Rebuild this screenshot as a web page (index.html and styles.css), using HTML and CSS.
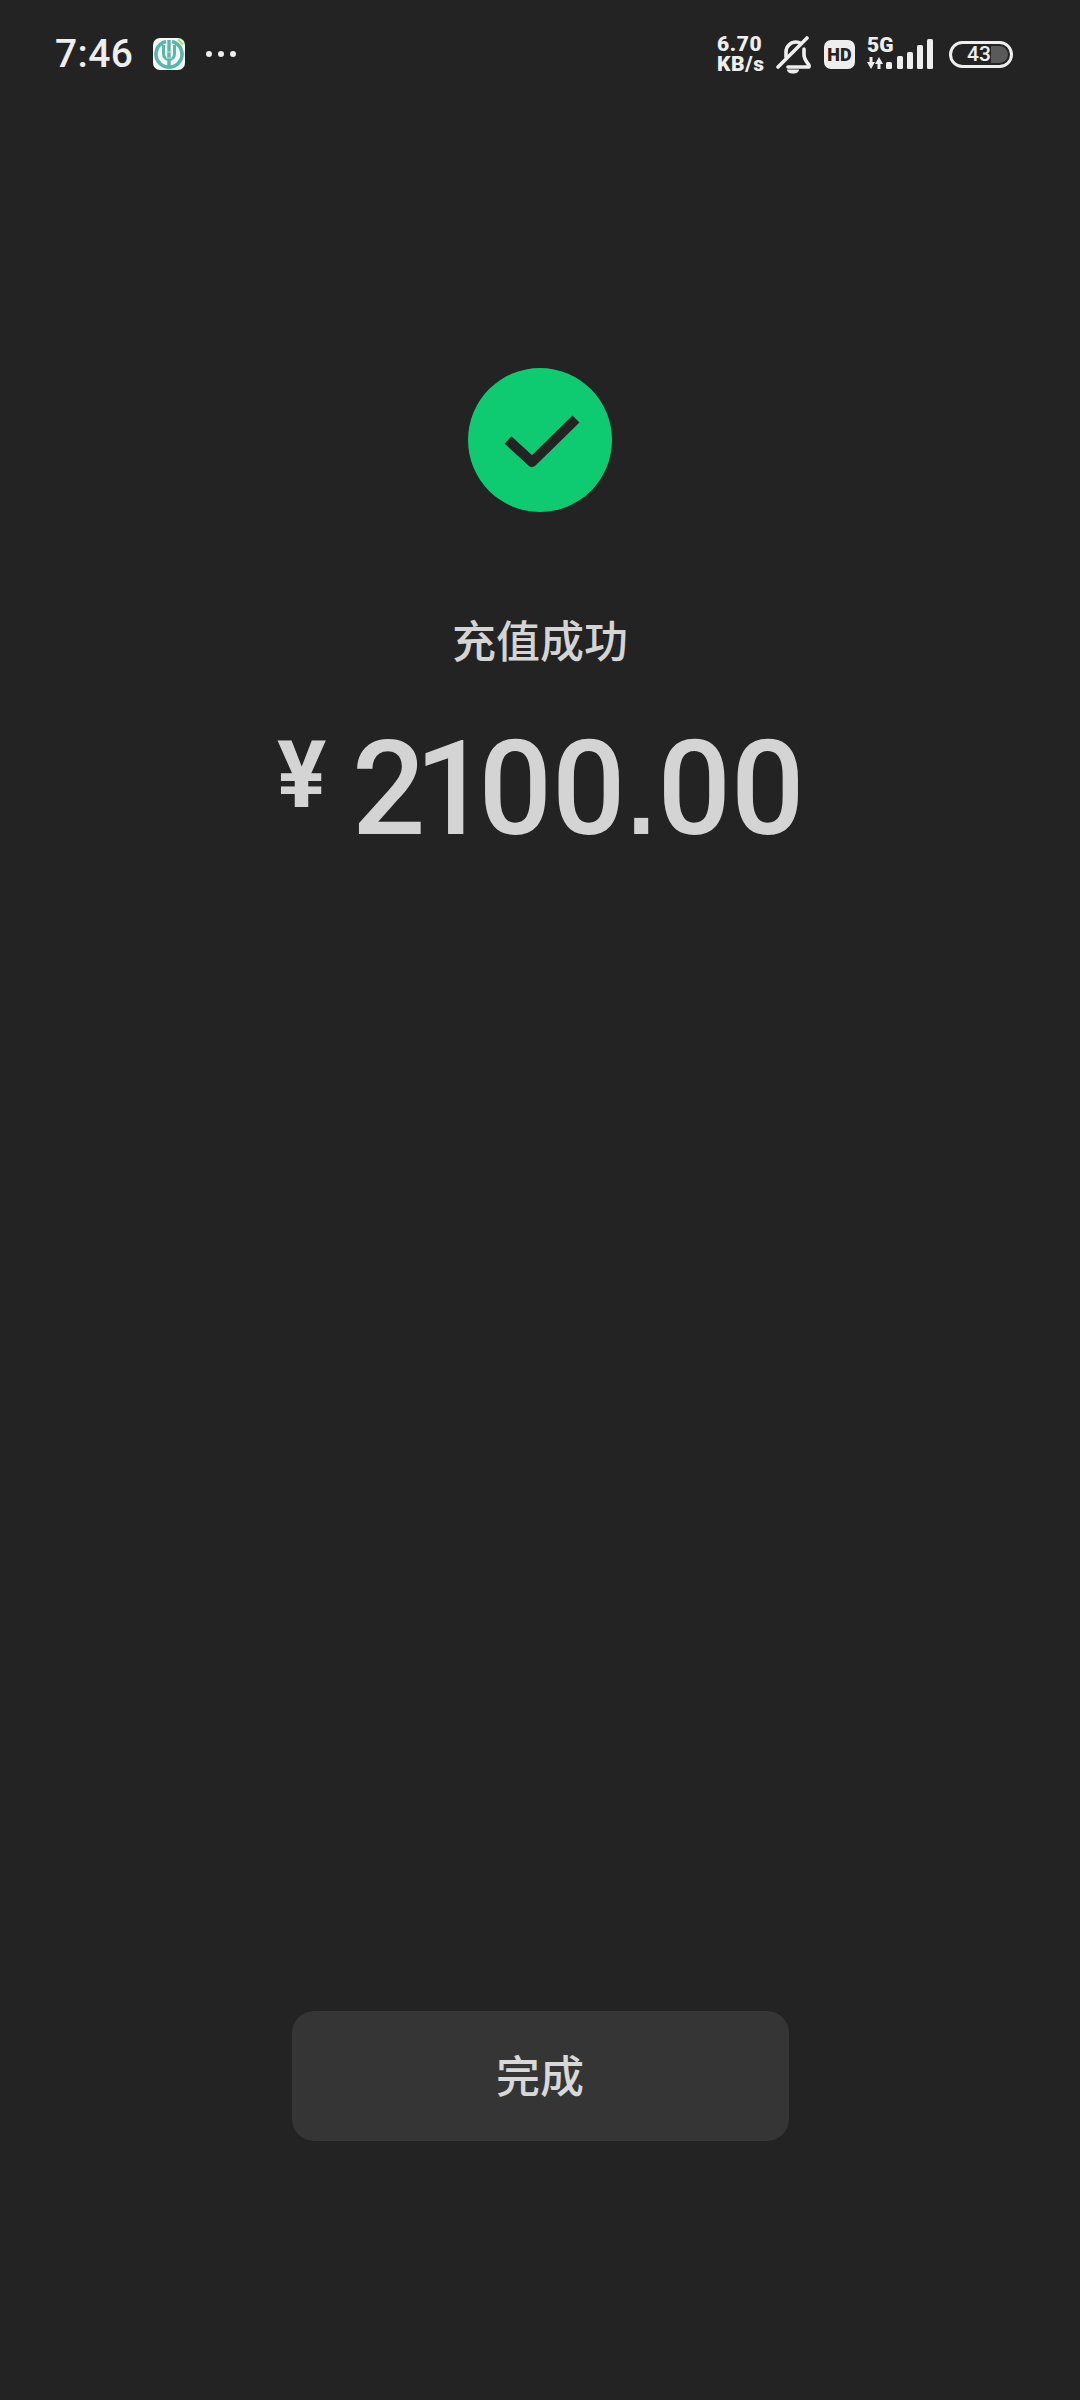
FILE: index.html
```html
<!DOCTYPE html>
<html lang="zh">
<head>
<meta charset="utf-8">
<title>充值成功</title>
<link rel="stylesheet" href="styles.css">
</head>
<body>
<div class="page">
  <header class="status">
    <div class="status-left">
      <span class="time">7:46</span>
      <svg class="app-icon" width="32" height="32" viewBox="0 0 32 32">
        <rect width="32" height="32" rx="7" fill="#f6faf9"/>
        <path d="M19 3.600A13 13 0 1 1 13 3.600" fill="none" stroke="#58b7ab" stroke-width="3.600"/>
        <path d="M10.500 7v9a5.500 5.500 0 0 0 11 0V7" fill="none" stroke="#58b7ab" stroke-width="3"/>
        <path d="M16 2v27" stroke="#58b7ab" stroke-width="3.400"/>
        <path d="M13 14h6M13 20h6" stroke="#bfe3de" stroke-width="1.200"/>
        <path d="M25 1.500l5 5" stroke="#a4dc74" stroke-width="2"/>
      </svg>
      <svg class="dots" width="32" height="8" viewBox="0 0 32 8">
        <circle cx="4" cy="4" r="3" fill="#eee"/><circle cx="16" cy="4" r="3" fill="#eee"/><circle cx="28" cy="4" r="3" fill="#eee"/>
      </svg>
    </div>
    <div class="status-right">
      <div class="speed"><span>6.70</span><span>KB/s</span></div>
      <svg class="bell" width="35" height="38" viewBox="0 0 35 38" fill="none" stroke="#eee" stroke-width="3.600" stroke-linecap="round" stroke-linejoin="round">
        <path d="M10 21v-5C10 10 15 6 20 6c2 0 3.500.5 5 1.500"/>
        <path d="M28 13v6c0 4 3 7.500 5 10v2H12"/>
        <path d="M2 31L31 2"/>
        <path d="M11 33.500h12c0 2.500-2.500 4-6 4s-6-1.500-6-4z" fill="#eee" stroke="none"/>
      </svg>
      <span class="hd">HD</span>
      <svg class="signal" width="67" height="38" viewBox="0 -3 67 38">
        <text class="five-g" x="1" y="17">5G</text>
        <path d="M3.500 22h3v5h2.500l-4 7-4-7h2.500zM11.500 34h3v-5h2.500l-4-7-4 7h2.500z" fill="#eee"/>
        <rect x="20" y="27" width="6" height="7" rx="1.500" fill="#eee"/>
        <rect x="31" y="21" width="6" height="13" rx="1.500" fill="#eee"/>
        <rect x="41" y="17" width="6" height="17" rx="1.500" fill="#eee"/>
        <rect x="51" y="10" width="6" height="24" rx="1.500" fill="#eee"/>
        <rect x="61" y="4" width="6" height="30" rx="1.500" fill="#eee"/>
      </svg>
      <div class="battery"><span class="battery-fill"></span><span class="battery-num">43</span></div>
    </div>
  </header>

  <main class="result">
    <svg class="check" width="144" height="144" viewBox="0 0 144 144">
      <circle cx="72" cy="72" r="72" fill="#0ecb72"/>
      <path d="M40 72l24 22 44-43" fill="none" stroke="#232323" stroke-width="10" stroke-linejoin="round"/>
    </svg>
    <h1 class="title">充值成功</h1>
    <div class="amount"><span class="yen">¥</span><span class="value"><span class="kern-two">2</span><span class="kern-one">1</span>0<span class="kern-zero">0</span><span class="dot">.</span>00</span></div>
  </main>

  <div class="action"><button class="done"><span class="done-label">完成</span></button></div>
</div>
</body>
</html>
```

FILE: styles.css
```css
* { box-sizing: border-box; }
html, body { margin: 0; padding: 0; }
body {
  width: 1080px;
  height: 2400px;
  background: #232323;
  font-family: Roboto, "Noto Sans CJK SC", sans-serif;
  overflow: hidden;
}
.page { display: flex; flex-direction: column; height: 2400px; }

.status {
  display: flex;
  justify-content: space-between;
  align-items: center;
  height: 108px;
  padding: 0 67px 0 55px;
  color: #eee;
}
.status-left { display: flex; align-items: center; }
.time { font-size: 39px; font-weight: 500; line-height: 44px; letter-spacing: .4px; width: 98px; }
.dots { margin-left: 20px; }
.status-right { display: flex; align-items: center; }
.speed {
  display: flex;
  flex-direction: column;
  font-size: 21px;
  line-height: 20px;
  font-weight: 900;
  letter-spacing: .6px;
  width: 50px;
}
.bell { margin-left: 9px; margin-top: 2px; }
.hd {
  margin-left: 13px;
  width: 31px;
  height: 29px;
  border-radius: 7px;
  background: #eee;
  color: #232323;
  font-size: 18px;
  font-weight: 900;
  line-height: 29px;
  text-align: center;
}
.signal { margin-left: 11px; margin-bottom: 6px; }
.five-g { font-size: 21px; font-weight: 900; fill: #eee; }
.battery {
  position: relative;
  margin-left: 16px;
  width: 64px;
  height: 27px;
  border: 3px solid #eee;
  border-radius: 14px;
  display: flex;
  align-items: center;
  justify-content: center;
}
.battery-fill {
  position: absolute;
  top: 2px;
  bottom: 2px;
  right: 2px;
  width: 17px;
  border-radius: 0 9px 9px 0;
  background: #5a5a5a;
}
.battery-num { position: relative; font-size: 21px; line-height: 21px; font-weight: 500; margin-right: 4px; }

.result {
  display: flex;
  flex-direction: column;
  align-items: center;
  padding-top: 260px;
  flex: 1;
}
.check { display: block; }
.title {
  margin: 100px 0 0;
  font-size: 44px;
  line-height: 62px;
  font-weight: 500;
  color: #d4d4d4;
}
.amount {
  display: flex;
  align-items: flex-start;
  color: #d4d4d4;
  margin-top: 45px;
  margin-left: 11px;
  height: 140px;
}
.yen { font-size: 92px; font-weight: 700; line-height: 112px; width: 75px; margin-top: 1px; }
.value {
  display: block;
  font-size: 132px;
  font-weight: 500;
  line-height: 140px;
  transform: scaleX(.98);
  transform-origin: left center;
}
.kern-two { letter-spacing: -11px; }
.kern-one { letter-spacing: -10px; }
.kern-zero { letter-spacing: -5px; }
.dot {
  font-family: "Liberation Sans", sans-serif;
  font-size: 150px;
  font-weight: 400;
  line-height: 0;
  letter-spacing: -4px;
}

.action { display: flex; justify-content: center; padding-bottom: 259px; }
.done {
  width: 497px;
  height: 130px;
  border: 0;
  border-radius: 22px;
  background: #353535;
  color: #d8d8d8;
  font-family: inherit;
  font-size: 44px;
  font-weight: 500;
  padding: 0 0 5px;
}
.done-label { display: block; }
```
